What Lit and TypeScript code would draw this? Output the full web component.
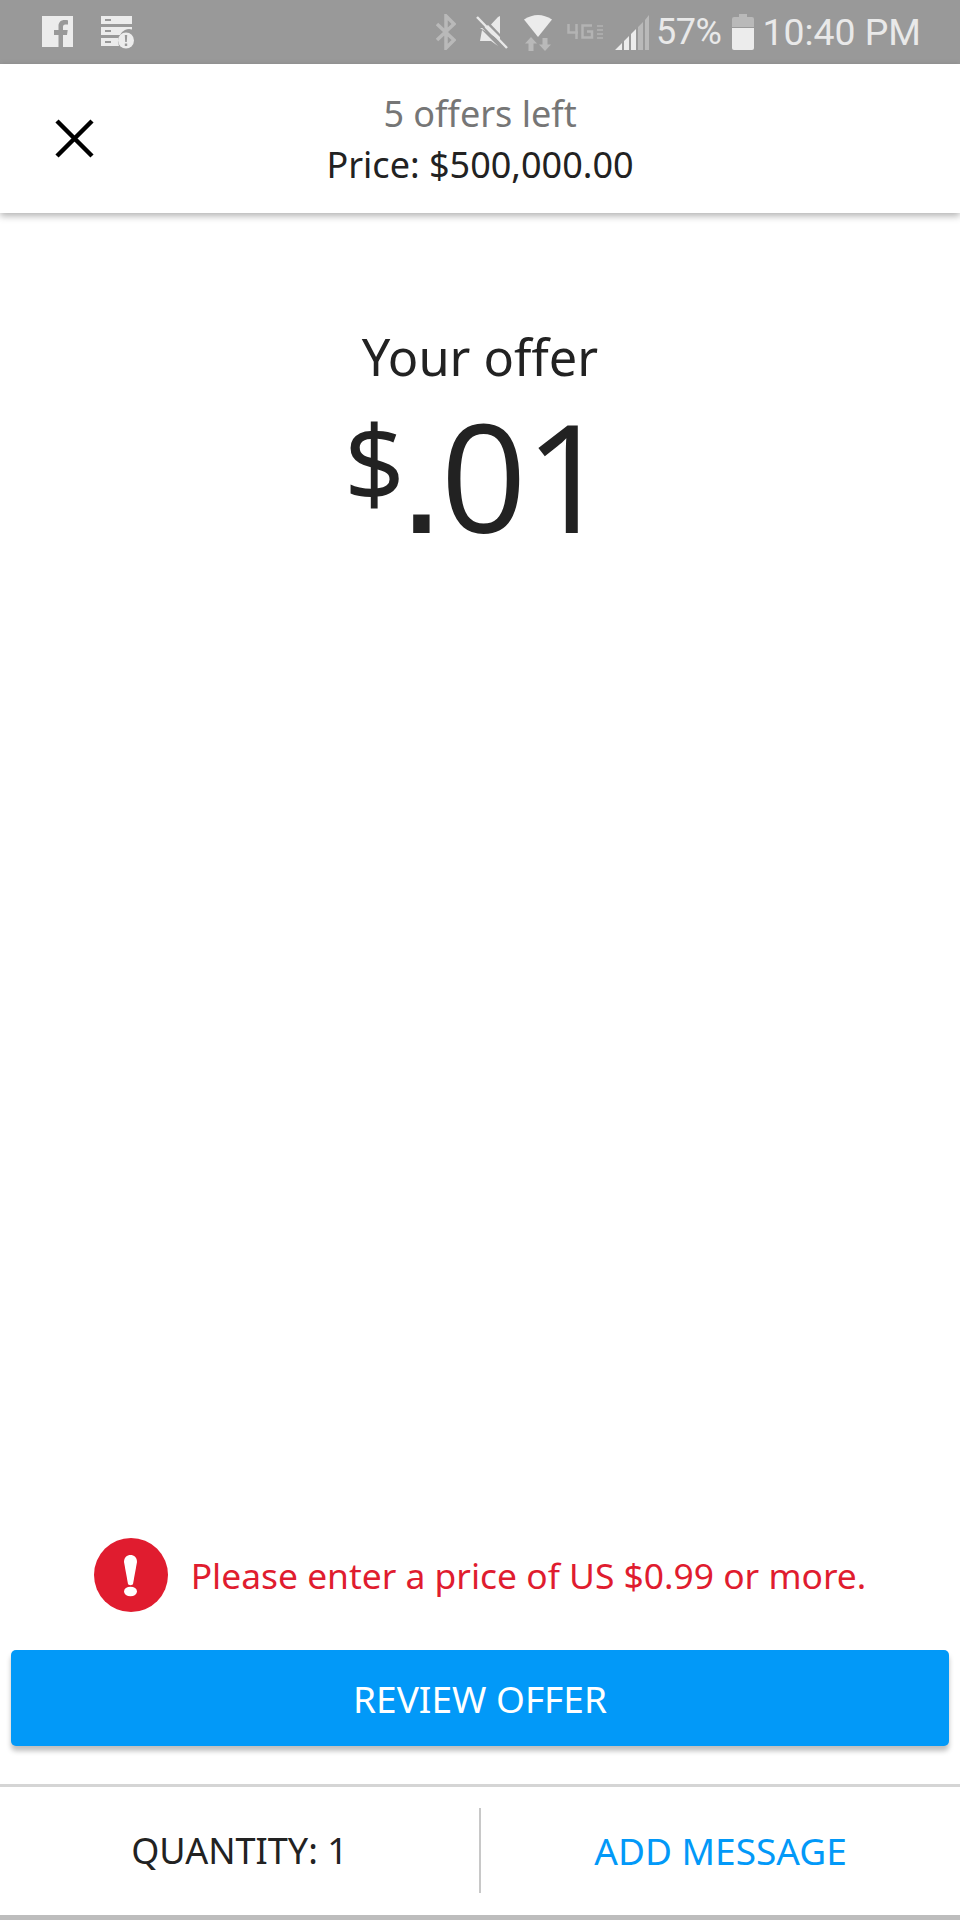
import { LitElement, html, css } from 'lit';
import { customElement } from 'lit/decorators.js';

@customElement('app-root')
export class AppRoot extends LitElement {
  static styles = css`
    :host {
      display: flex;
      flex-direction: column;
      height: 1920px;
      background: #fff;
      font-family: "Noto Sans", "Open Sans", sans-serif;
      color: #222;
    }
    svg { display: block; flex: none; }

    .status {
      height: 64px;
      flex: none;
      background: #999;
      display: flex;
      align-items: center;
      padding: 0 39px 0 42px;
      color: #e9e9e9;
      font-family: Roboto, sans-serif;
    }
    .status .left { display: flex; gap: 28px; flex: 1; }
    .status .right { display: flex; align-items: center; }
    .pct { font-size: 36px; margin: 0 11px 0 7px; letter-spacing: -0.5px; }
    .time { font-size: 37.4px; margin-left: 8px; }

    .header {
      height: 149px;
      flex: none;
      display: grid;
      grid-template-columns: 1fr auto 1fr;
      align-items: center;
      box-shadow: 0 3px 7px rgba(0, 0, 0, 0.3);
      position: relative;
    }
    .close { padding-left: 55px; }
    .titles { text-align: center; font-size: 36px; line-height: 51px; }
    .left-count { color: #767676; }

    .main { flex: 1; display: flex; flex-direction: column; align-items: center; padding-top: 109px; }
    .your-offer { font-size: 50.5px; line-height: 70px; }
    .amount { display: flex; align-items: flex-start; margin-right: 7px; }
    .currency { font-size: 106px; line-height: 120px; margin: 9px 0 0 0; }
    .value { font-family: "Open Sans", sans-serif; font-size: 151px; line-height: 166px; letter-spacing: -2px; margin-left: -7px; }
    .dot { font-family: "Liberation Sans", sans-serif; font-size: 172px; line-height: 100px; margin-right: -3px; }

    .error {
      display: flex;
      align-items: center;
      justify-content: center;
      gap: 23px;
      color: #e01c2f;
      font-size: 35.4px;
      margin-bottom: 38px;
    }

    .review {
      flex: none;
      height: 96px;
      margin: 0 11px;
      display: flex;
      align-items: center;
      justify-content: center;
      background: #0299f8;
      color: #fff;
      border-radius: 5px;
      font-size: 37px;
      box-shadow: 0 5px 5px rgba(0, 0, 0, 0.25);
    }

    .footer {
      flex: none;
      height: 126px;
      padding-bottom: 2px;
      margin-top: 38px;
      border-top: 3px solid #d5d5d5;
      border-bottom: 5px solid #bdbdbd;
      display: grid;
      grid-template-columns: 1fr 2px 1fr;
      align-items: center;
      font-size: 36px;
      text-align: center;
    }
    .footer .sep { height: 85px; background: #c8c8c8; }
    .footer .add { color: #0299f8; font-size: 37px; }
  `;

  render() {
    return html`
      <div class="status">
        <div class="left">
          <svg width="31" height="31" viewBox="0 0 31 31">
            <path fill="#ececec" d="M0 0h31v31H21V19h4l.7-5H21v-3c0-1.500.6-2.400 2.400-2.400H26V4.200C25.400 4.100 24 4 22.500 4 19 4 16.500 6.100 16.500 10v4H12v5h4.500v12H0z"/>
          </svg>
          <svg width="33" height="33" viewBox="0 0 33 33">
            <path fill="#ececec" d="M0 0h31v8H0zM0 11h31v2.500A10 10 0 0 0 19 19H0zM0 22h17.500a10 10 0 0 0 .5 8H0z"/>
            <path fill="#999" d="M4 3h6v2H4zM4 14h6v2H4zM4 25h6v2H4z"/>
            <circle cx="25" cy="24.500" r="8" fill="#ececec"/>
            <path fill="#999" d="M23.800 19h2.400l-.4 7h-1.600zM23.800 27.500h2.400V30h-2.400z"/>
          </svg>
        </div>
        <div class="right">
          <svg width="20" height="36" viewBox="0 0 20 36" fill="none" stroke="#b9b9b9" stroke-width="3.500">
            <path d="M1 10l17 16-8 8V2l8 8L1 26"/>
          </svg>
          <svg style="margin-left:20px" width="32" height="34" viewBox="0 0 32 34">
            <path fill="#e9e9e9" d="M4 13h4l4-3 12 12v3zM6 15l16 16-7-5H4zM24 1v18L15 9.500 22 2z"/>
            <path stroke="#e9e9e9" stroke-width="2.500" d="M1 2l30 31"/>
            <path stroke="#999" stroke-width="2" d="M0 5l28 29"/>
          </svg>
          <svg style="margin-left:16px" width="28" height="37" viewBox="0 0 28 37">
            <path fill="#ececec" d="M0 5.500Q14-3.500 28 5.500L14 23z"/>
            <path fill="#b9b9b9" d="M7 23l6 6.500H9.500V37h-5v-7.500H1zM21 37l-6-6.500h3.500V24h5v6.500H27z"/>
          </svg>
          <svg style="margin-left:15px" width="37" height="16" viewBox="0 0 37 16" fill="none" stroke="#b3b3b3" stroke-width="2.500">
            <path d="M1.500 0v8.500H11M9.500 0v15M25 1.500H15.500v12H25V7.500h-5"/>
            <path stroke-width="1.500" d="M30 2h6M30 6h6M30 10h6M30 14h6"/>
          </svg>
          <svg style="margin-left:11px" width="34" height="35" viewBox="0 0 34 35">
            <path fill="#ececec" d="M0 35L7 28V35zM9 26l5-5V35H9z"/>
            <path fill="#ececec" d="M16 19l5-5V35h-5z"/>
            <path fill="#b9b9b9" d="M23 12l5-5V35h-5zM30 5l4-5V35h-4z"/>
          </svg>
          <span class="pct">57%</span>
          <svg width="22" height="36" viewBox="0 0 22 36">
            <path fill="#b9b9b9" d="M7 0h8v3h5a2 2 0 0 1 2 2v8H0V5a2 2 0 0 1 2-2h5z"/>
            <path fill="#ececec" d="M0 14h22v20a2 2 0 0 1-2 2H2a2 2 0 0 1-2-2z"/>
          </svg>
          <span class="time">10:40 PM</span>
        </div>
      </div>

      <div class="header">
        <div class="close">
          <svg width="39" height="39" viewBox="0 0 39 39" stroke="#000" stroke-width="4.500" fill="none">
            <path d="M2 2l35 35M37 2L2 37"/>
          </svg>
        </div>
        <div class="titles">
          <div class="left-count">5 offers left</div>
          <div>Price: $500,000.00</div>
        </div>
        <div></div>
      </div>

      <div class="main">
        <div class="your-offer">Your offer</div>
        <div class="amount">
          <span class="currency">$</span>
          <span class="value"><span class="dot">.</span>01</span>
        </div>
      </div>

      <div class="error">
        <svg width="74" height="74" viewBox="0 0 74 74">
          <circle cx="37" cy="37" r="37" fill="#e01c2f"/>
          <path fill="#fff" d="M30 24c0-4.500 3-7 6.500-7s6.500 2.500 6.500 7l-4 22c-.3 1.500-4.700 1.500-5 0z"/>
          <ellipse cx="36.500" cy="53.500" rx="6.500" ry="4.800" fill="#fff"/>
        </svg>
        <span>Please enter a price of US $0.99 or more.</span>
      </div>

      <div class="review">REVIEW OFFER</div>

      <div class="footer">
        <div>QUANTITY: 1</div>
        <div class="sep"></div>
        <div class="add">ADD MESSAGE</div>
      </div>
    `;
  }
}
